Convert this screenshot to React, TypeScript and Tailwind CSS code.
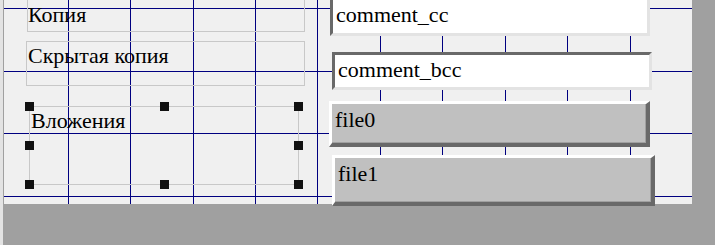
const gridX = [64, 126, 189, 251, 313, 376, 438, 501, 563, 626];
const gridY = [8, 71, 133, 196];

function Grid() {
  return (
    <svg className="absolute inset-0" width={688} height={204} shapeRendering="crispEdges">
      {gridX.map((x) => (
        <line key={`v${x}`} x1={x + 0.5} y1={0} x2={x + 0.5} y2={204} stroke="#000080" strokeWidth={1} />
      ))}
      {gridY.map((y) => (
        <line key={`h${y}`} x1={0} y1={y + 0.5} x2={688} y2={y + 0.5} stroke="#000080" strokeWidth={1} />
      ))}
    </svg>
  );
}

function Handle() {
  return <div className="h-[9px] w-[9px] bg-[#111111]" />;
}

function Label({ children }: { children: string }) {
  return (
    <span className="block font-['Liberation_Serif','Times_New_Roman',serif] text-[22px] leading-[24px] text-black">
      {children}
    </span>
  );
}

const field =
  "absolute h-[38px] w-[320px] border-[3px] border-b-[#e3e3e3] border-l-[#696969] border-r-[#e3e3e3] border-t-[#696969] bg-white pl-[3px] pt-[3px]";
const button =
  "absolute border-b-4 border-l-[3px] border-r-4 border-t-[3px] border-b-[#696969] border-l-white border-r-[#696969] border-t-white bg-[#c0c0c0] pl-[3px] pt-[4px] shadow-[inset_-1px_-1px_0_#a0a0a0]";

export default function App() {
  return (
    <div className="flex h-[245px] w-[715px] overflow-hidden bg-[#a0a0a0]">
      <div className="h-full w-[3px] bg-[#e3e3e3]" />
      <div className="h-full w-[1px] bg-[#a0a0a0]" />
      <div className="relative h-[204px] w-[688px] bg-[#f0f0f0]">
        <Grid />

        {/* label frames */}
        <div className="absolute left-[23px] top-[-13px] h-[45px] w-[278px] border border-[#c8c8c8] pt-[15px]">
          <Label>Копия</Label>
        </div>
        <div className="absolute left-[22px] top-[41px] h-[45px] w-[279px] border border-[#c8c8c8] pl-[1px] pt-[2px]">
          <Label>Скрытая копия</Label>
        </div>
        <div className="absolute left-[25px] top-[106px] h-[79px] w-[270px] border border-[#c8c8c8] pl-[1px] pt-[2px]">
          <Label>Вложения</Label>
        </div>

        {/* selection handles around the attachments frame */}
        <div className="absolute left-[21px] top-[102px] flex h-[87px] w-[278px] flex-col justify-between">
          <div className="flex justify-between">
            <Handle />
            <Handle />
            <Handle />
          </div>
          <div className="flex justify-between">
            <Handle />
            <Handle />
          </div>
          <div className="flex justify-between">
            <Handle />
            <Handle />
            <Handle />
          </div>
        </div>

        {/* text fields */}
        <div className={`${field} left-[326px] top-[-3px] h-[39px]`}>
          <Label>comment_cc</Label>
        </div>
        <div className={`${field} left-[328px] top-[52px]`}>
          <Label>comment_bcc</Label>
        </div>

        {/* file buttons */}
        <div className={`${button} left-[325px] top-[101px] h-[46px] w-[321px]`}>
          <Label>file0</Label>
        </div>
        <div className={`${button} left-[328px] top-[155px] h-[51px] w-[323px]`}>
          <Label>file1</Label>
        </div>
      </div>
    </div>
  );
}
